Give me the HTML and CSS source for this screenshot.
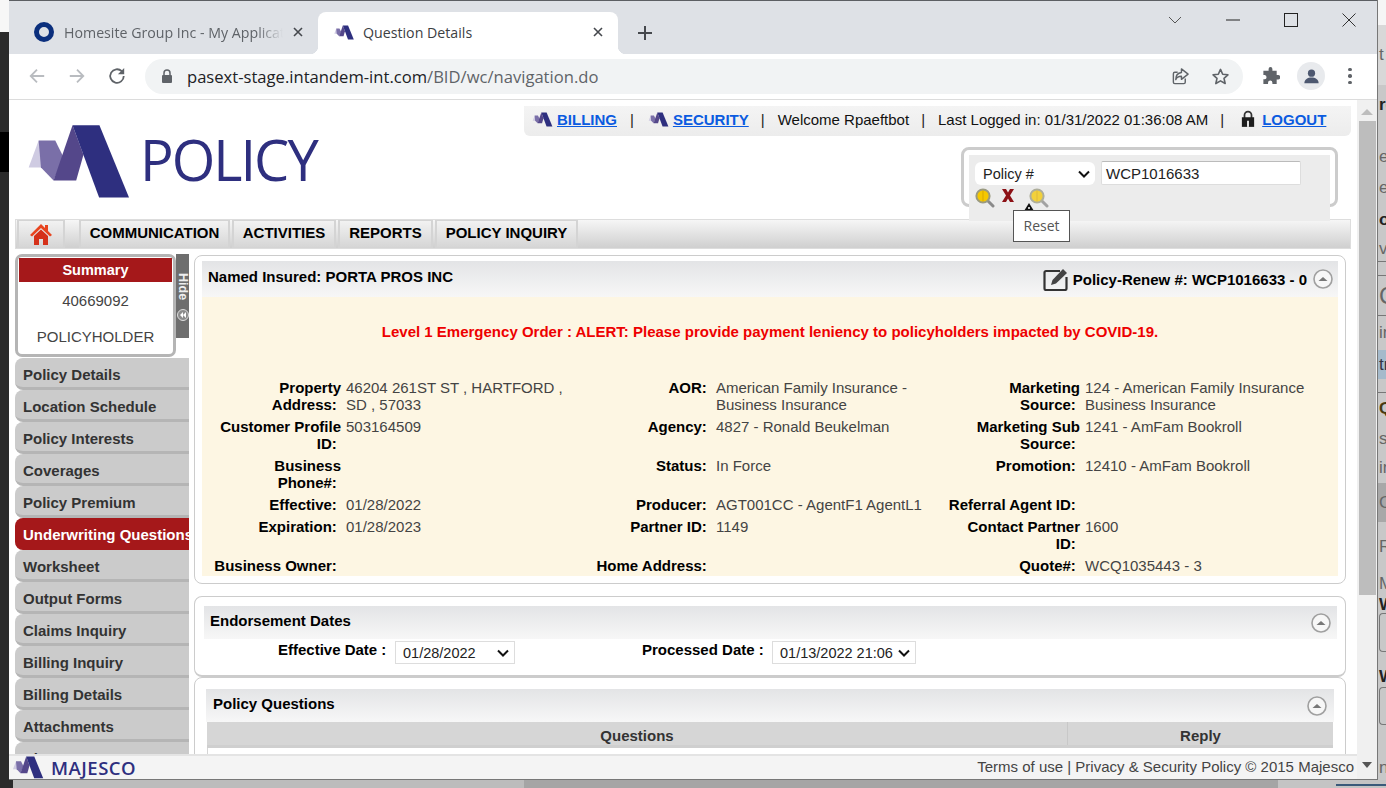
FILE: index.html
```html
<!DOCTYPE html>
<html lang="en">
<head>
<meta charset="utf-8">
<title>Question Details</title>
<link rel="stylesheet" href="styles.css">
</head>
<body>
<svg class="defs" width="0" height="0" aria-hidden="true">
  <symbol id="mark" viewBox="80 70 310 230">
    <polygon fill="#cfcbe2" points="85,203 115,122 140,175 122,203"/>
    <polygon fill="#7a6fa8" points="115,122 165,122 190,172 160,242 122,203"/>
    <polygon fill="#54478a" points="160,242 217,76 250,165 228,242"/>
    <polygon fill="#2e2f7f" points="217,76 298,76 387,293 297,293"/>
  </symbol>
  <symbol id="mag" viewBox="0 0 20 20">
    <path d="M12 12l6 6" stroke="#8a8a8a" stroke-width="3" stroke-linecap="round"/>
    <circle cx="8" cy="8" r="6.6" fill="#f5c800" stroke="#9a9a80" stroke-width="2"/>
    <path d="M8 2.500v11" stroke="#d9a900"/>
  </symbol>
  <symbol id="up" viewBox="0 0 20 20">
    <circle cx="10" cy="10" r="9" fill="#f7f7f7" stroke="#a0a0a0" stroke-width="1.6"/>
    <path d="M5.500 12l4.500-4 4.500 4z" fill="#777"/>
  </symbol>
</svg>
<div class="desktop">
  <div class="strip-left"><div class="sl-a"></div><div class="sl-b"></div><div class="sl-c"></div><div class="sl-d"></div></div>
  <div class="window">
    <div class="tabstrip">
      <div class="tab">
        <svg class="fav" viewBox="0 0 20 20"><circle cx="10" cy="10" r="7.500" fill="none" stroke="#0b2f7d" stroke-width="5"/></svg>
        <span class="tab-title fade">Homesite Group Inc - My Application</span>
        <svg class="tab-x" viewBox="0 0 10 10"><path d="M1 1l8 8M9 1l-8 8" stroke="#45484d" stroke-width="1.6"/></svg>
      </div>
      <div class="tab active">
        <svg class="fav-m"><use href="#mark"/></svg>
        <span class="tab-title">Question Details</span>
        <svg class="tab-x" viewBox="0 0 10 10"><path d="M1 1l8 8M9 1l-8 8" stroke="#45484d" stroke-width="1.6"/></svg>
      </div>
      <svg class="plus" viewBox="0 0 14 14"><path d="M7 0v14M0 7h14" stroke="#45484d" stroke-width="2"/></svg>
      <div class="winctl">
        <svg viewBox="0 0 14 14"><path d="M1 4l6 6 6-6" fill="none" stroke="#555" stroke-width="1"/></svg>
        <svg viewBox="0 0 14 14"><path d="M0 7h14" stroke="#222" stroke-width="1"/></svg>
        <svg viewBox="0 0 14 14"><rect x=".5" y=".5" width="13" height="13" fill="none" stroke="#222"/></svg>
        <svg viewBox="0 0 14 14"><path d="M.5.5l13 13M13.500.5l-13 13" stroke="#333" stroke-width="1"/></svg>
      </div>
    </div>
    <div class="toolbar">
      <svg class="tb-ic" viewBox="0 0 20 20"><path d="M18 10H3M10 3l-7 7 7 7" fill="none" stroke="#b9bcc0" stroke-width="2"/></svg>
      <svg class="tb-ic" viewBox="0 0 20 20"><path d="M2 10h15M10 3l7 7-7 7" fill="none" stroke="#b9bcc0" stroke-width="2"/></svg>
      <svg class="tb-ic" viewBox="0 0 20 20"><path d="M17.500 10a7.500 7.500 0 1 1-2.200-5.300" fill="none" stroke="#5f6368" stroke-width="2"/><path d="M18 1v7h-7z" fill="#5f6368"/></svg>
      <div class="omnibox">
        <svg class="lock-s" viewBox="0 0 12 14"><path d="M3 6V4a3 3 0 0 1 6 0v2" fill="none" stroke="#5f6368" stroke-width="1.500"/><rect x="1" y="6" width="10" height="8" rx="1" fill="#5f6368"/></svg>
        <span class="url">pasext-stage.intandem-int.com<span class="url-dim">/BID/wc/navigation.do</span></span>
        <svg class="om-ic" viewBox="0 0 20 20"><path d="M15 12v4a1.500 1.500 0 0 1-1.500 1.500H4A1.500 1.500 0 0 1 2.500 16V7A1.500 1.500 0 0 1 4 5.500h3" fill="none" stroke="#5f6368" stroke-width="1.500"/><path d="M11 2l7 5.500-7 5.500V9.800c-3 0-5 1-6 3.500 0-4 2-7 6-7.500z" fill="none" stroke="#5f6368" stroke-width="1.500" stroke-linejoin="round"/></svg>
        <svg class="om-ic" viewBox="0 0 20 20"><path d="M10 2.500l2.300 5.100 5.500.6-4.100 3.700 1.200 5.500-4.900-2.800-4.900 2.800 1.200-5.500-4.100-3.700 5.500-.6z" fill="none" stroke="#5f6368" stroke-width="1.700" stroke-linejoin="round"/></svg>
      </div>
      <svg class="puzzle" viewBox="0 0 20 20"><path d="M8 2a2 2 0 0 1 4 0v2h4.500v4.500H18a2.300 2.300 0 0 1 0 4.600h-1.500V18H12v-1.500a2.300 2.300 0 0 0-4.600 0V18H2.500v-5H4a2.300 2.300 0 0 0 0-4.500H2.500V4H8z" fill="#5f6368"/></svg>
      <div class="avatar"><svg viewBox="0 0 20 20"><circle cx="10" cy="6.500" r="3.800" fill="#4d5870"/><path d="M2.500 17c0-4 3.500-6 7.500-6s7.500 2 7.500 6z" fill="#4d5870"/></svg></div>
      <div class="kebab"><i></i><i></i><i></i></div>
    </div>
    <div class="viewport">
      <div class="page">
        <header class="head">
          <div class="brand">
            <svg class="brand-mark"><use href="#mark"/></svg>
            <span class="brand-name">POLICY</span>
          </div>
          <div class="head-right">
            <div class="userbar">
              <svg class="mini"><use href="#mark"/></svg><a class="ulink" href="#">BILLING</a><span class="sep sep-wide">|</span>
              <svg class="mini"><use href="#mark"/></svg><a class="ulink" href="#">SECURITY</a><span class="sep">|</span>
              <span class="utext">Welcome Rpaeftbot</span><span class="sep">|</span>
              <span class="utext">Last Logged in: 01/31/2022 01:36:08 AM</span><span class="sep">|</span>
              <svg class="lock" viewBox="0 0 16 20"><path d="M4 9V5.500a4 4 0 0 1 8 0V9" fill="none" stroke="#333" stroke-width="2"/><rect x="1" y="8" width="14" height="11" fill="#1d1d1d"/><rect x="7" y="12" width="2" height="7" fill="#fff"/></svg>
              <a class="ulink" href="#">LOGOUT</a>
            </div>
            <div class="searchbox">
              <div class="searchinner">
                <div class="search-row">
                  <div class="fake-select"><span>Policy #</span><svg viewBox="0 0 12 8"><path d="M1 1.500l5 5 5-5" fill="none" stroke="#111" stroke-width="2"/></svg></div>
                  <div class="fake-input">WCP1016633</div>
                </div>
                <div class="search-icons">
                  <svg class="mag"><use href="#mag"/></svg>
                  <svg class="xic" viewBox="0 0 12 13"><path d="M0 0h4l2 3.500L8 0h4L8 6.500l4 6.500H8L6 9.500 4 13H0l4-6.500z" fill="#8c1116"/></svg>
                  <svg class="mag mag-dim"><use href="#mag"/></svg>
                </div>
                <svg class="cursor" viewBox="0 0 10 8"><path d="M5 0l5 8H0z" fill="#111"/><circle cx="5" cy="5" r="1" fill="#fff"/></svg>
                <div class="tooltip">Reset</div>
              </div>
            </div>
          </div>
        </header>
        <nav class="menubar">
          <div class="mi mi-home"><svg viewBox="0 0 22 22"><path d="M11 1L0 12l2 1.600L11 5l9 8.600 2-1.600-4-4V2h-3v3z" fill="#e8441f"/><path d="M4 13l7-6.500 7 6.500v9h-5v-6H9v6H4z" fill="#d5311a"/></svg></div>
          <div class="mi mi-1">COMMUNICATION</div>
          <div class="mi mi-2">ACTIVITIES</div>
          <div class="mi mi-3">REPORTS</div>
          <div class="mi mi-4">POLICY INQUIRY</div>
        </nav>
        <div class="content">
          <aside class="side">
            <div class="side-top">
              <div class="summary">
                <div class="sum-head">Summary</div>
                <div class="sum-num">40669092</div>
                <div class="sum-role">POLICYHOLDER</div>
              </div>
              <div class="hide-tab"><span>Hide</span><svg viewBox="0 0 12 12"><circle cx="6" cy="6" r="5.500" fill="#8c8c8c" stroke="#ddd"/><path d="M6 3L3 6l3 3zM9 3L6 6l3 3z" fill="#fff"/></svg></div>
            </div>
            <div class="sn">Policy Details</div>
            <div class="sn">Location Schedule</div>
            <div class="sn">Policy Interests</div>
            <div class="sn">Coverages</div>
            <div class="sn">Policy Premium</div>
            <div class="sn sn-on">Underwriting Questions</div>
            <div class="sn">Worksheet</div>
            <div class="sn">Output Forms</div>
            <div class="sn">Claims Inquiry</div>
            <div class="sn">Billing Inquiry</div>
            <div class="sn">Billing Details</div>
            <div class="sn">Attachments</div>
            <div class="sn">Diary</div>
          </aside>
          <main class="main">
            <section class="panel p1">
              <div class="phead ph1">
                <span class="ph-title">Named Insured: PORTA PROS INC</span>
                <div class="ph-right">
                  <svg class="edit" viewBox="0 0 26 24"><path d="M17 4H3a1.500 1.500 0 0 0-1.500 1.500v16A1.500 1.500 0 0 0 3 23h19a1.500 1.500 0 0 0 1.500-1.500V10" fill="none" stroke="#333" stroke-width="2.200"/><path d="M8 18l1.500-5L20 2l4 4L13 16.500z" fill="#444"/></svg>
                  <span class="ph-renew">Policy-Renew #: WCP1016633 - 0</span>
                  <svg class="up"><use href="#up"/></svg>
                </div>
              </div>
              <div class="pbody">
                <div class="alert">Level 1 Emergency Order : ALERT: Please provide payment leniency to policyholders impacted by COVID-19.</div>
                <div class="grid">
                  <div class="l">Property<br>Address:&nbsp;</div><div class="v">46204 261ST ST , HARTFORD ,<br>SD , 57033</div>
                  <div class="l">AOR:&nbsp;</div><div class="v">American Family Insurance -<br>Business Insurance</div>
                  <div class="l">Marketing<br>Source:&nbsp;</div><div class="v">124 - American Family Insurance<br>Business Insurance</div>

                  <div class="l">Customer Profile<br>ID:&nbsp;</div><div class="v">503164509</div>
                  <div class="l">Agency:&nbsp;</div><div class="v">4827 - Ronald Beukelman</div>
                  <div class="l">Marketing Sub<br>Source:&nbsp;</div><div class="v">1241 - AmFam Bookroll</div>

                  <div class="l">Business<br>Phone#:&nbsp;</div><div class="v"></div>
                  <div class="l">Status:&nbsp;</div><div class="v">In Force</div>
                  <div class="l">Promotion:&nbsp;</div><div class="v">12410 - AmFam Bookroll</div>

                  <div class="l">Effective:&nbsp;</div><div class="v">01/28/2022</div>
                  <div class="l">Producer:&nbsp;</div><div class="v">AGT001CC - AgentF1 AgentL1</div>
                  <div class="l">Referral Agent ID:&nbsp;</div><div class="v"></div>

                  <div class="l">Expiration:&nbsp;</div><div class="v">01/28/2023</div>
                  <div class="l">Partner ID:&nbsp;</div><div class="v">1149</div>
                  <div class="l">Contact Partner<br>ID:&nbsp;</div><div class="v">1600</div>

                  <div class="l">Business Owner:&nbsp;</div><div class="v"></div>
                  <div class="l">Home Address:&nbsp;</div><div class="v"></div>
                  <div class="l">Quote#:&nbsp;</div><div class="v">WCQ1035443 - 3</div>
                </div>
              </div>
            </section>
            <section class="panel p2">
              <div class="phead ph2">
                <span class="ph-title">Endorsement Dates</span>
                <svg class="up"><use href="#up"/></svg>
              </div>
              <div class="dates">
                <span class="d-label d-l1">Effective Date :</span>
                <div class="d-sel d-s1"><span>01/28/2022</span><svg viewBox="0 0 12 8"><path d="M1 1.500l5 5 5-5" fill="none" stroke="#111" stroke-width="2"/></svg></div>
                <span class="d-label d-l2">Processed Date :</span>
                <div class="d-sel d-s2"><span>01/13/2022 21:06</span><svg viewBox="0 0 12 8"><path d="M1 1.500l5 5 5-5" fill="none" stroke="#111" stroke-width="2"/></svg></div>
              </div>
            </section>
            <section class="panel p3">
              <div class="phead ph3">
                <span class="ph-title">Policy Questions</span>
                <svg class="up"><use href="#up"/></svg>
              </div>
              <div class="qtable">
                <div class="qh qh-q">Questions</div>
                <div class="qh qh-r">Reply</div>
              </div>
              <div class="qrow"></div>
            </section>
          </main>
        </div>
      </div>
      <div class="scrollbar">
        <div class="sb-up"></div>
        <div class="sb-thumb"></div>
        <div class="sb-down"></div>
      </div>
      <footer class="footer">
        <div class="f-brand"><svg class="f-mark"><use href="#mark"/></svg><span class="f-name">MAJESCO</span></div>
        <div class="f-links">Terms of use | Privacy &amp; Security Policy © 2015 Majesco</div>
      </footer>
    </div>
  </div>
  <div class="strip-right">
    <div class="sr h25 blank"></div>
    <div class="sr h60 thin">t</div>
    <div class="sr h40 bold">rc</div>
    <div class="sr h17"></div>
    <div class="sr h30">e</div>
    <div class="sr h32">ec</div>
    <div class="sr h32 bold">ow</div>
    <div class="sr h26 line">vs</div>
    <div class="sr h14 line"></div>
    <div class="sr h40 line big">C</div>
    <div class="sr h34">in</div>
    <div class="sr h29 blue">tr</div>
    <div class="sr h14 line"></div>
    <div class="sr h32 brown">Q</div>
    <div class="sr h28">se</div>
    <div class="sr h30">in</div>
    <div class="sr h39 greyb">C:</div>
    <div class="sr h50">R</div>
    <div class="sr h24">M</div>
    <div class="sr h17 bold">W</div>
    <div class="sr h39 box"></div>
    <div class="sr h35 bold wlow">W</div>
    <div class="sr h38 box"></div>
    <div class="sr h55 lastn">n</div>
  </div>
  <div class="strip-bottom"><div class="sb1"></div><div class="sb2"></div><div class="sb3"></div><div class="sb4"><div class="sb-line"></div></div></div>
</div>
</body>
</html>
```
FILE: styles.css
```css
* { box-sizing: border-box; }
html, body { margin: 0; padding: 0; width: 1386px; height: 788px; overflow: hidden; }
body { font-family: "Liberation Sans", Arial, sans-serif; font-size: 15px; color: #444; background: #c8c8c8; }
.defs { position: absolute; }

.desktop { display: grid; grid-template-columns: 9px 1369px 8px; grid-template-rows: 780px 8px; width: 1386px; height: 788px; }
.strip-left { grid-row: 1 / 3; grid-column: 1; display: flex; flex-direction: column; }
.sl-a { height: 32px; background: #f7f7f7; }
.sl-b { height: 100px; background: #2b2b2b; }
.sl-c { height: 40px; background: #000; }
.sl-d { flex: 1; background: #2b2b2b; }
.strip-bottom { grid-row: 2; grid-column: 2 / 4; display: flex; }
.sb1 { width: 4px; background: #2b2b2b; }
.sb2 { width: 511px; background: #bcbcbc; }
.sb3 { width: 754px; background: #a5a5a5; }
.sb4 { flex: 1; background: #c4c4c4; padding: 4px 0 0 58px; }
.sb-line { height: 2px; background: #3a5a7a; }

.strip-right { grid-row: 1; grid-column: 3; overflow: hidden; display: flex; flex-direction: column; background: #c8c8c8; color: #666; font-size: 17px; }
.sr { white-space: nowrap; display: flex; align-items: center; padding-left: 1px; overflow: hidden; flex: none; }
.blank { background: #f5f5f5; }
.thin { background: #d8d8d8; }
.bold { font-weight: 700; color: #222; }
.line { border-bottom: 1px solid #777; }
.big { font-size: 24px; }
.blue { background: #a5bacb; color: #334; }
.brown { font-weight: 700; color: #4a3a10; }
.greyb { background: #a8a8a8; }
.box { border: 1px solid #777; border-right: 0; border-radius: 4px 0 0 4px; margin-left: 1px; }
.wlow { align-items: flex-end; }
.lastn { align-items: flex-end; padding-bottom: 2px; }
.h14 { height: 14px; } .h17 { height: 17px; } .h24 { height: 24px; } .h25 { height: 25px; } .h26 { height: 26px; }
.h28 { height: 28px; } .h29 { height: 29px; } .h30 { height: 30px; }
.h32 { height: 32px; } .h34 { height: 34px; } .h35 { height: 35px; } .h38 { height: 38px; }
.h39 { height: 39px; } .h40 { height: 40px; } .h50 { height: 50px; } .h55 { height: 55px; } .h60 { height: 60px; }

.window { grid-row: 1; grid-column: 2; display: flex; flex-direction: column; background: #fff; border-right: 1px solid #777; border-bottom: 1px solid #777; overflow: hidden; }

.tabstrip { height: 54px; background: #dee1e6; border-top: 1px solid #5c5f63; display: flex; align-items: flex-end; flex: none; position: relative; }
.tab { width: 300px; height: 42px; display: flex; align-items: center; padding: 0 15px 2px 16px; font-family: "Open Sans", sans-serif; font-size: 14.2px; color: #5f6368; margin-left: 9px; border-radius: 8px 8px 0 0; flex: none; position: relative; }
.tab:first-child { margin-left: 0; width: 309px; padding-left: 25px; padding-right: 15px; }
.tab.active { background: #fff; color: #3c4043; margin-left: 0; }
.tab.active::before, .tab.active::after { content: ""; position: absolute; bottom: 0; width: 8px; height: 8px; }
.tab.active::before { left: -8px; background: radial-gradient(circle at 0 0, transparent 8px, #fff 8.5px); }
.tab.active::after { right: -8px; background: radial-gradient(circle at 100% 0, transparent 8px, #fff 8.5px); }
.fav { width: 20px; height: 20px; flex: none; margin-right: 10px; }
.fav-m { width: 20px; height: 17px; flex: none; margin-right: 9px; }
.tab-title { flex: 1; white-space: nowrap; overflow: hidden; }
.fade { -webkit-mask-image: linear-gradient(90deg, #000 88%, transparent 100%); mask-image: linear-gradient(90deg, #000 88%, transparent 100%); margin-right: 10px; }
.tab-x { width: 10px; height: 10px; flex: none; }
.plus { width: 14px; height: 14px; margin: 0 0 14px 20px; flex: none; }
.winctl { margin-left: auto; align-self: flex-start; display: flex; gap: 44px; padding: 12px 21px 0 0; }
.winctl svg { width: 14px; height: 14px; }

.toolbar { height: 46px; flex: none; display: flex; align-items: center; background: #fff; border-bottom: 1px solid #dcdcdc; padding: 0 0 1px 19px; }
.tb-ic { width: 18px; height: 18px; margin-right: 22px; flex: none; }
.omnibox { width: 1098px; height: 35px; margin-left: -3px; border-radius: 18px; background: #f1f3f4; display: flex; align-items: center; padding-left: 16px; flex: none; }
.lock-s { width: 12px; height: 14px; flex: none; margin-right: 14px; }
.url { font-family: "Open Sans", sans-serif; font-size: 16.6px; color: #202124; flex: 1; white-space: nowrap; }
.url-dim { color: #5f6368; }
.om-ic { width: 19px; height: 19px; flex: none; margin-right: 21px; }
.om-ic:last-child { margin-right: 13px; }
.puzzle { width: 19px; height: 19px; margin-left: 18px; flex: none; }
.avatar { width: 28px; height: 28px; border-radius: 50%; background: #e8eaed; margin-left: 17px; display: flex; align-items: center; justify-content: center; flex: none; }
.avatar svg { width: 19px; height: 19px; }
.kebab { margin-left: 23px; display: flex; flex-direction: column; gap: 3px; flex: none; }
.kebab i { width: 3.5px; height: 3.5px; border-radius: 50%; background: #5f6368; display: block; }

.viewport { flex: 1; position: relative; display: flex; min-height: 0; background: #fff; }
.page { width: 1348px; flex: none; overflow: hidden; }
.scrollbar { flex: 1; background: #f0f0f0; display: flex; flex-direction: column; align-items: center; }
.sb-up { width: 0; height: 0; border: 6px solid transparent; border-top: 0; border-bottom: 6px solid #bdbdbd; margin-top: 9px; flex: none; }
.sb-thumb { width: 17px; height: 474px; background: #bdbdbd; margin-top: 6px; flex: none; }
.sb-down { width: 0; height: 0; border: 5px solid transparent; border-bottom: 0; border-top: 6px solid #555; margin-top: 167px; flex: none; }

.head { display: flex; height: 119px; position: relative; z-index: 2; }
.brand { display: flex; align-items: flex-start; padding: 23px 0 0 18px; width: 515px; flex: none; }
.brand-mark { width: 103px; height: 77px; flex: none; }
.brand-name { font-family: "Open Sans", sans-serif; font-size: 56px; line-height: 70px; letter-spacing: -2px; color: #2e2f7f; margin: 1px 0 0 10px; }
.head-right { width: 827px; flex: none; padding-top: 6px; }
.userbar { height: 30px; background: linear-gradient(#f4f4f4, #ececec); border-radius: 0 0 6px 6px; display: flex; align-items: center; padding: 0 0 4px 8px; color: #111; white-space: nowrap; font-size: 15px; }
.mini { width: 21px; height: 15px; margin-right: 4px; flex: none; }
.ulink { color: #0b5be0; font-weight: 700; text-decoration: underline; }
.sep { margin: 0 13px 0 12px; color: #222; }
.sep-wide { margin: 0 14px 0 13px; }
.lock { width: 14px; height: 18px; margin: 0 7px 0 4px; flex: none; }

.searchbox { width: 377px; height: 60px; margin: 11px 0 0 437px; border: 3px solid #ccc; border-radius: 8px; padding: 5px 5px 0; }
.searchinner { background: #ececec; height: 66px; position: relative; padding: 6px 0 0 6px; }
.search-row { display: flex; gap: 6px; align-items: flex-start; }
.fake-select { width: 120px; height: 23px; background: #fff; border-radius: 6px; display: flex; align-items: center; justify-content: space-between; padding: 0 5px 0 8px; color: #222; font-size: 14.5px; margin-top: 1px; }
.fake-select svg, .d-sel svg { width: 12px; height: 8px; flex: none; }
.fake-input { width: 200px; height: 24px; background: #fff; border: 1px solid #ddd; border-top-color: #bbb; border-radius: 2px; padding: 1px 4px 0; line-height: 22px; color: #222; font-size: 15px; }
.search-icons { display: flex; align-items: flex-start; margin: 3px 0 0 0; }
.mag { width: 20px; height: 20px; flex: none; }
.xic { width: 12px; height: 13px; margin: 1px 15px 0 7px; flex: none; }
.mag-dim { opacity: .75; }
.cursor { position: absolute; left: 55px; top: 48px; width: 10px; height: 8px; }
.tooltip { position: absolute; left: 44px; top: 55px; width: 57px; height: 32px; background: #fff; border: 1px solid #555; font-family: "Open Sans", sans-serif; font-size: 14px; color: #555; text-align: center; line-height: 30px; z-index: 5; }

.menubar { margin-left: 6px; width: 1336px; height: 30px; display: flex; align-items: stretch; background: linear-gradient(#f6f6f6, #cfcfcf); border: 1px solid #ddd; padding: 0 0 0 1px; }
.mi { border: 2px solid #d4d4d4; border-bottom-width: 1px; border-top-width: 1px; color: #000; font-weight: 700; font-size: 15px; padding-bottom: 3px; display: flex; align-items: center; justify-content: center; white-space: nowrap; background: linear-gradient(#f2f2f2, #d6d6d6); }
.mi-home { width: 48px; margin-right: 14px; padding-bottom: 0; }
.mi-home svg { width: 22px; height: 22px; }
.mi-1 { width: 151px; margin-right: 2px; }
.mi-2 { width: 104px; margin-right: 2px; }
.mi-3 { width: 95px; margin-right: 2px; }
.mi-4 { width: 143px; }

.content { display: flex; margin: 5px 0 0 6px; align-items: flex-start; }
.side { width: 174px; flex: none; margin-right: 5px; overflow: hidden; }
.side-top { display: flex; align-items: flex-start; margin-bottom: 1px; }
.summary { width: 161px; height: 103px; border: 3px solid #b5b5b5; border-radius: 7px; background: #fff; flex: none; text-align: center; padding: 1px 1px 0; }
.sum-head { height: 24px; background: #a5181a; color: #fff; font-weight: 700; font-size: 14.5px; line-height: 24px; }
.sum-num { margin-top: 10px; line-height: 17px; }
.sum-role { margin-top: 19px; line-height: 17px; }
.hide-tab { width: 13px; height: 84px; background: #6e6e6e; flex: none; color: #eee; font-weight: 700; font-size: 12.5px; display: flex; flex-direction: column; align-items: center; padding-top: 19px; gap: 9px; }
.hide-tab span { writing-mode: vertical-rl; }
.hide-tab svg { width: 12px; height: 12px; flex: none; }
.sn { height: 32px; background: #cbcbcb; border-bottom: 3px solid #b5b5b5; border-radius: 8px 0 0 8px; padding: 4px 0 0 8px; display: flex; align-items: center; font-weight: 700; color: #333; white-space: nowrap; overflow: hidden; font-size: 15px; }
.sn-on { background: #a5181a; color: #fff; border-bottom-color: #a5181a; }

.main { width: 1152px; flex: none; margin-top: 1px; }
.panel { border: 1px solid #ccc; border-radius: 8px; background: #fff; }
.p1 { height: 329px; padding: 5px 7px 0; }
.p2 { height: 81px; margin-top: 12px; padding: 9px 8px 0 9px; border-bottom-width: 2px; }
.p3 { height: 200px; padding: 11px 11px 0; }
.phead { display: flex; align-items: center; justify-content: space-between; background: linear-gradient(#e3e4e6, #f7f7f7); }
.ph1 { height: 36px; padding: 0 5px 0 6px; }
.ph2 { height: 33px; padding: 0 6px 5px 6px; }
.ph3 { height: 33px; padding: 0 7px 5px 7px; }
.ph2 .up, .ph3 .up { margin-bottom: -5px; }
.ph-title { color: #000; font-weight: 700; font-size: 15px; }
.ph1 .ph-title { align-self: flex-start; padding-top: 7px; }
.ph-right { display: flex; align-items: center; }
.edit { width: 26px; height: 24px; margin-right: 4px; }
.ph-renew { color: #000; font-weight: 700; font-size: 15px; }
.up { width: 20px; height: 20px; flex: none; margin-left: 6px; }
.pbody { height: 279px; background: #fdf6e3; padding-top: 26px; }
.alert { color: #e00; font-weight: 700; text-align: center; line-height: 17px; }
.grid { display: grid; grid-template-columns: 139px 228px 132px 225px 134px 1fr; column-gap: 5px; row-gap: 5px; margin-top: 39px; line-height: 17px; }
.l { color: #000; font-weight: 700; text-align: right; white-space: nowrap; }
.v { white-space: nowrap; }

.dates { position: relative; height: 30px; display: flex; align-items: flex-start; }
.d-label { color: #000; font-weight: 700; white-space: nowrap; margin-top: 2px; }
.d-l1 { margin-left: 74px; width: 117px; }
.d-l2 { margin-left: 127px; width: 130px; }
.d-sel { height: 23px; border: 1px solid #ddd; background: #fff; display: flex; align-items: center; justify-content: space-between; padding: 0 5px 0 7px; color: #222; font-size: 14.5px; margin-top: 2px; }
.d-s1 { width: 120px; }
.d-s2 { width: 144px; }

.qtable { display: flex; height: 26px; margin: 0 1px; background: #d6d6d6; border-bottom: 3px solid #cfcfcf; }
.qh { color: #333; font-weight: 700; display: flex; align-items: center; justify-content: center; padding-top: 3px; }
.qh-q { width: 861px; border-right: 1px solid #c8c8c8; }
.qh-r { flex: 1; }
.qrow { height: 120px; margin: 0 1px; border-left: 1px solid #d6d6d6; }

.footer { position: absolute; left: 0; bottom: 0; width: 1348px; height: 25px; background: #f4f4f4; border-top: 2px solid #e4e4e4; display: flex; align-items: center; justify-content: space-between; padding: 0 3px 2px 3px; z-index: 3; }
.f-brand { display: flex; align-items: center; margin-bottom: -2px; }
.f-mark { width: 32px; height: 23px; flex: none; }
.f-name { font-family: "Open Sans", sans-serif; font-weight: 600; font-size: 18.5px; color: #2e2f7f; margin-left: 7px; letter-spacing: .5px; }
.f-links { font-size: 15px; color: #444; white-space: nowrap; }
```
